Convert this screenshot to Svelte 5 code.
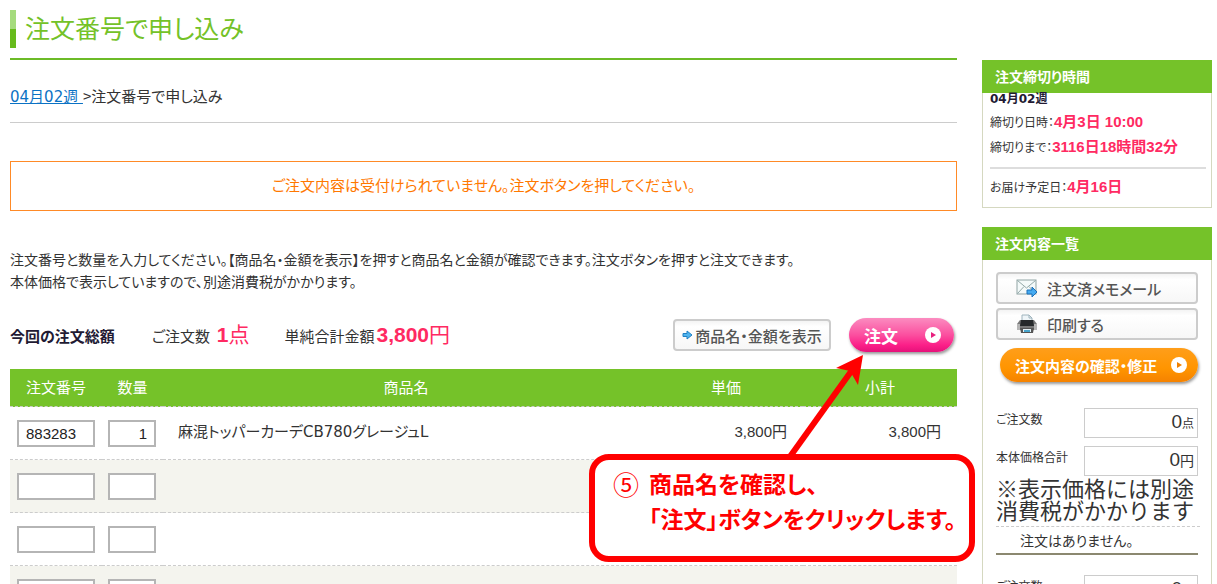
<script lang="ts">
	const notice = 'ご注文内容は受付けられていません。注文ボタンを押してください。';

	let rows = [
		{ code: '883283', qty: '1', name: '麻混トッパーカーデCB780グレージュL', price: '3,800円', subtotal: '3,800円' },
		{ code: '', qty: '', name: '', price: '', subtotal: '' },
		{ code: '', qty: '', name: '', price: '', subtotal: '' },
		{ code: '', qty: '', name: '', price: '', subtotal: '' },
	];
</script>

<div class="page">
	<main>
		<h1>注文番号で申し込み</h1>

		<nav><a href="#week">04月02週&nbsp;</a><span class="sep">&gt;</span>注文番号で申し込み</nav>

		<p class="notice">{notice}</p>

		<p class="guide">
			注文番号と数量を入力してください。【商品名・金額を表示】を押すと商品名と金額が確認できます。注文ボタンを押すと注文できます。<br />
			本体価格で表示していますので、別途消費税がかかります。
		</p>

		<div class="summary">
			<strong>今回の注文総額</strong>
			<span class="count">ご注文数 <em><b>1</b>点</em></span>
			<span>単純合計金額<em><b>3,800</b>円</em></span>
			<button class="plain show">
				<svg width="11" height="10" viewBox="0 0 11 10">
					<path d="M1 3.5h4V1l5 4-5 4V6.500H1z" fill="#4fb4ee" stroke="#2080c4" />
				</svg>
				商品名・金額を表示
			</button>
			<button class="pill pink">
				注文
				<svg width="16" height="16" viewBox="0 0 16 16">
					<circle cx="8" cy="8" r="8" fill="#fff" />
					<path d="M6 5l5 3-5 3z" fill="#e8207f" />
				</svg>
			</button>
		</div>

		<table>
			<thead>
				<tr>
					<th class="code">注文番号</th>
					<th class="qty">数量</th>
					<th>商品名</th>
					<th class="price">単価</th>
					<th class="price">小計</th>
				</tr>
			</thead>
			<tbody>
				{#each rows as row}
					<tr>
						<td class="code"><input aria-label="注文番号" bind:value={row.code} /></td>
						<td class="qty"><input aria-label="数量" bind:value={row.qty} /></td>
						<td class="name">{row.name}</td>
						<td class="price">{row.price}</td>
						<td class="price">{row.subtotal}</td>
					</tr>
				{/each}
			</tbody>
		</table>

		<div class="callout">
			<svg class="arrow" width="90" height="104" viewBox="0 0 90 104">
				<path d="M12 103L78 11" stroke="#f00" stroke-width="6" />
				<path d="M86 0L59 13l14 3 8 14z" fill="#f00" />
			</svg>
			<span class="num">⑤</span>
			<p>商品名を確認し、<br />「注文」ボタンをクリックします。</p>
		</div>
	</main>

	<aside>
		<section class="box">
			<h2>注文締切り時間</h2>
			<div class="deadline">
				<strong>04月02週</strong>
				<p>締切り日時：<b>4月3日 10:00</b></p>
				<p>締切りまで：<b>3116日18時間32分</b></p>
				<p class="delivery">お届け予定日：<b>4月16日</b></p>
			</div>
		</section>

		<section class="box">
			<h2>注文内容一覧</h2>
			<div class="orders">
				<button class="plain side">
					<svg width="22" height="20" viewBox="0 0 22 20">
						<rect x="1" y="2" width="19" height="14" fill="#f4fafa" stroke="#8fa3a3" />
						<path d="M1.500 2.500L10.500 10l9-7.500M1.500 15.500L8 8.500M19.500 15.500L13 8.500" fill="none" stroke="#93a9a9" />
						<path d="M11 12h5V9l5 5-5 5v-3h-5z" fill="#45aaf0" stroke="#1d70b8" />
					</svg>
					注文済メモメール
				</button>
				<button class="plain side">
					<svg width="22" height="20" viewBox="0 0 22 20">
						<path d="M6 8V1h7l3 3v4z" fill="#eef5f8" stroke="#9fb4bd" />
						<path d="M13 1v3h3" fill="none" stroke="#9fb4bd" />
						<path d="M4 6h14l3 4v6H1v-6z" fill="#777" />
						<path d="M5 6h12l1 6H4z" fill="#26292b" />
						<path d="M1 10h3v6H1zM18 10h3v6h-3z" fill="#b5b5b5" />
						<path d="M4 14h14l-1 5H5z" fill="#555" />
						<path d="M7 15h8v3H7z" fill="#e4f1f6" />
						<path d="M8 16h6v2H8z" fill="#48a5cc" />
					</svg>
					印刷する
				</button>
				<button class="pill orange">
					注文内容の確認・修正
					<svg width="16" height="16" viewBox="0 0 16 16">
						<circle cx="8" cy="8" r="8" fill="#fff" />
						<path d="M6 5l5 3-5 3z" fill="#f08000" />
					</svg>
				</button>

				<dl>
					<dt>ご注文数</dt>
					<dd>0<small>点</small></dd>
					<dt>本体価格合計</dt>
					<dd>0<small class="yen">円</small></dd>
				</dl>
				<p class="tax">※表示価格には別途消費税がかかります</p>
				<p class="empty">注文はありません。</p>
				<dl>
					<dt>ご注文数</dt>
					<dd>0<small>点</small></dd>
				</dl>
			</div>
		</section>
	</aside>
</div>

<style>
	:global(body) {
		margin: 0;
		background: #fff;
	}

	.page {
		display: grid;
		grid-template-columns: minmax(0, 1fr) 230px;
		gap: 25px;
		box-sizing: border-box;
		height: 100vh;
		padding: 0 5px 0 10px;
		overflow: hidden;
		color: #333;
		font-family: 'DejaVu Sans', 'Noto Sans CJK JP', sans-serif;
		font-size: 15px;
		font-feature-settings: 'palt';
	}

	main {
		position: relative;
	}

	p,
	dl,
	dd {
		margin: 0;
	}

	h1,
	h2,
	th,
	.sep,
	.notice,
	.guide,
	.tax,
	.empty,
	button,
	.callout {
		font-family: 'Noto Sans CJK JP', sans-serif;
	}

	h1 {
		display: flex;
		gap: 9px;
		height: 38px;
		margin: 0;
		padding: 10px 0;
		border-bottom: 2px solid #6cbb27;
		color: #74c228;
		font-size: 25px;
		font-weight: 400;
		line-height: 34px;
	}

	h1::before {
		content: '';
		width: 6px;
		height: 38px;
		background: linear-gradient(#a5db7d 50%, #67bb1c 50%);
	}

	nav {
		margin-bottom: 38px;
		padding: 24px 0 13px;
		border-bottom: 1px solid #ccc;
		line-height: 24px;
	}

	a {
		color: #0b72c4;
	}

	.notice {
		margin-bottom: 37px;
		padding-bottom: 2px;
		border: 1px solid #ff8a26;
		color: #ff7800;
		line-height: 46px;
		text-align: center;
	}

	.guide {
		font-size: 14px;
		line-height: 22px;
	}

	.summary {
		display: flex;
		align-items: center;
		height: 42px;
		margin-top: 22px;
		padding-bottom: 13px;
		white-space: nowrap;
	}

	.summary strong {
		color: #221a33;
	}

	.count {
		margin: 0 35px 0 37px;
	}

	em {
		margin-left: 2px;
		color: #ff2a62;
		font-family: 'Liberation Sans', 'Noto Sans CJK JP', sans-serif;
		font-size: 21px;
		font-style: normal;
		line-height: 24px;
	}

	button {
		display: flex;
		align-items: center;
		box-sizing: border-box;
		font-feature-settings: 'palt';
		white-space: nowrap;
		cursor: pointer;
	}

	.plain {
		height: 32px;
		border: 2px solid #ccc;
		border-radius: 4px;
		background: linear-gradient(#f4f4f4, #fff 20%, #f7f7f7);
		color: #555;
		font-size: 15px;
		font-weight: 500;
	}

	.show {
		justify-content: center;
		gap: 2px;
		width: 158px;
		margin-left: auto;
		padding: 0;
	}

	.pill {
		justify-content: space-between;
		border: 0;
		border-radius: 18px;
		box-shadow: 1px 2px 3px #999;
		color: #fff;
		font-weight: bold;
	}

	.pink {
		width: 105px;
		height: 34px;
		margin: 0 3px 0 18px;
		padding: 0 13px 0 15px;
		background: linear-gradient(#fb8cc0, #fb4f9f 50%, #fb1f88 80%, #e5127a);
		font-size: 17px;
	}

	table {
		width: 100%;
		border-spacing: 0;
		table-layout: fixed;
	}

	th,
	td {
		box-sizing: border-box;
		height: 53px;
		padding: 0;
		border-bottom: 1px dashed #ccc;
	}

	th {
		height: 38px;
		padding-bottom: 2px;
		background: #75c229;
		color: #fff;
		font-weight: normal;
	}

	.code {
		width: 92px;
	}

	.qty {
		width: 61px;
	}

	.price {
		width: 154px;
	}

	td.code {
		padding-left: 7px;
	}

	td.qty {
		padding-left: 6px;
	}

	td.name {
		padding: 0 0 5px 15px;
	}

	td.price {
		padding: 0 16px 5px 0;
		font-family: 'Liberation Sans', 'Noto Sans CJK JP', sans-serif;
		text-align: right;
	}

	tbody tr:nth-child(even) {
		background: #f4f4ee;
	}

	input {
		display: block;
		box-sizing: border-box;
		width: 78px;
		height: 27px;
		padding: 0 7px;
		border: 2px solid #b5b5b5;
		background: #fff;
		color: #222;
		font-family: 'Liberation Sans', sans-serif;
		font-size: 15px;
	}

	.qty input {
		width: 48px;
		text-align: right;
	}

	.callout {
		position: absolute;
		top: 454px;
		right: -18px;
		display: flex;
		box-sizing: border-box;
		width: 386px;
		height: 108px;
		padding: 6px 0 0 18px;
		border: 6px solid #f00;
		border-radius: 20px;
		background: #fff;
		color: #f00;
		font-size: 23px;
		line-height: 35px;
		white-space: nowrap;
	}

	.callout p {
		font-weight: bold;
	}

	.num {
		flex: none;
		width: 36px;
		font-size: 26px;
	}

	.arrow {
		position: absolute;
		top: -105px;
		left: 182px;
	}

	aside {
		padding-top: 60px;
	}

	.box {
		margin-bottom: 19px;
		border: 1px solid #d5d8c0;
		border-top: 0;
	}

	h2 {
		margin: 0 -1px;
		padding-left: 13px;
		background: #75c229;
		color: #fff;
		font-size: 14px;
		line-height: 33px;
	}

	.deadline {
		padding: 0 5px 7px 7px;
		font-size: 12px;
		line-height: 24px;
	}

	.deadline strong {
		display: block;
		height: 17px;
		color: #221a33;
		line-height: 12px;
	}

	.deadline b {
		color: #ff2a62;
		font-family: 'Liberation Sans', 'Noto Sans CJK JP', sans-serif;
		font-size: 15px;
	}

	.delivery {
		margin-top: 7px;
		padding-top: 6px;
		border-top: 2px solid #ddd;
	}

	.orders {
		padding: 12px 13px 40px;
	}

	.side {
		gap: 9px;
		width: 100%;
		margin-bottom: 4px;
		padding: 0 18px;
	}

	.orange {
		width: 198px;
		height: 34px;
		margin: 8px 0 26px 4px;
		padding: 0 11px 0 15px;
		background: linear-gradient(#ff9e1a, #ff9500 60%, #f58200);
		font-size: 15px;
	}

	dl {
		display: grid;
		grid-template-columns: 1fr 114px;
		row-gap: 8px;
		font-size: 12px;
	}

	dt {
		line-height: 24px;
	}

	dd {
		box-sizing: border-box;
		height: 30px;
		padding-right: 3px;
		border: 1px solid #ccc;
		font-family: 'Liberation Sans', 'Noto Sans CJK JP', sans-serif;
		font-size: 19px;
		line-height: 26px;
		text-align: right;
	}

	small {
		font-size: 12px;
	}

	.yen {
		font-size: 14px;
	}

	.tax {
		margin-right: -2px;
		padding-bottom: 6px;
		border-bottom: 1px dashed #ccc;
		font-feature-settings: normal;
		font-size: 22px;
		line-height: 22px;
	}

	.empty {
		margin-bottom: 20px;
		padding-left: 24px;
		border-bottom: 2px solid #8b8870;
		font-size: 14px;
		line-height: 26px;
	}
</style>
